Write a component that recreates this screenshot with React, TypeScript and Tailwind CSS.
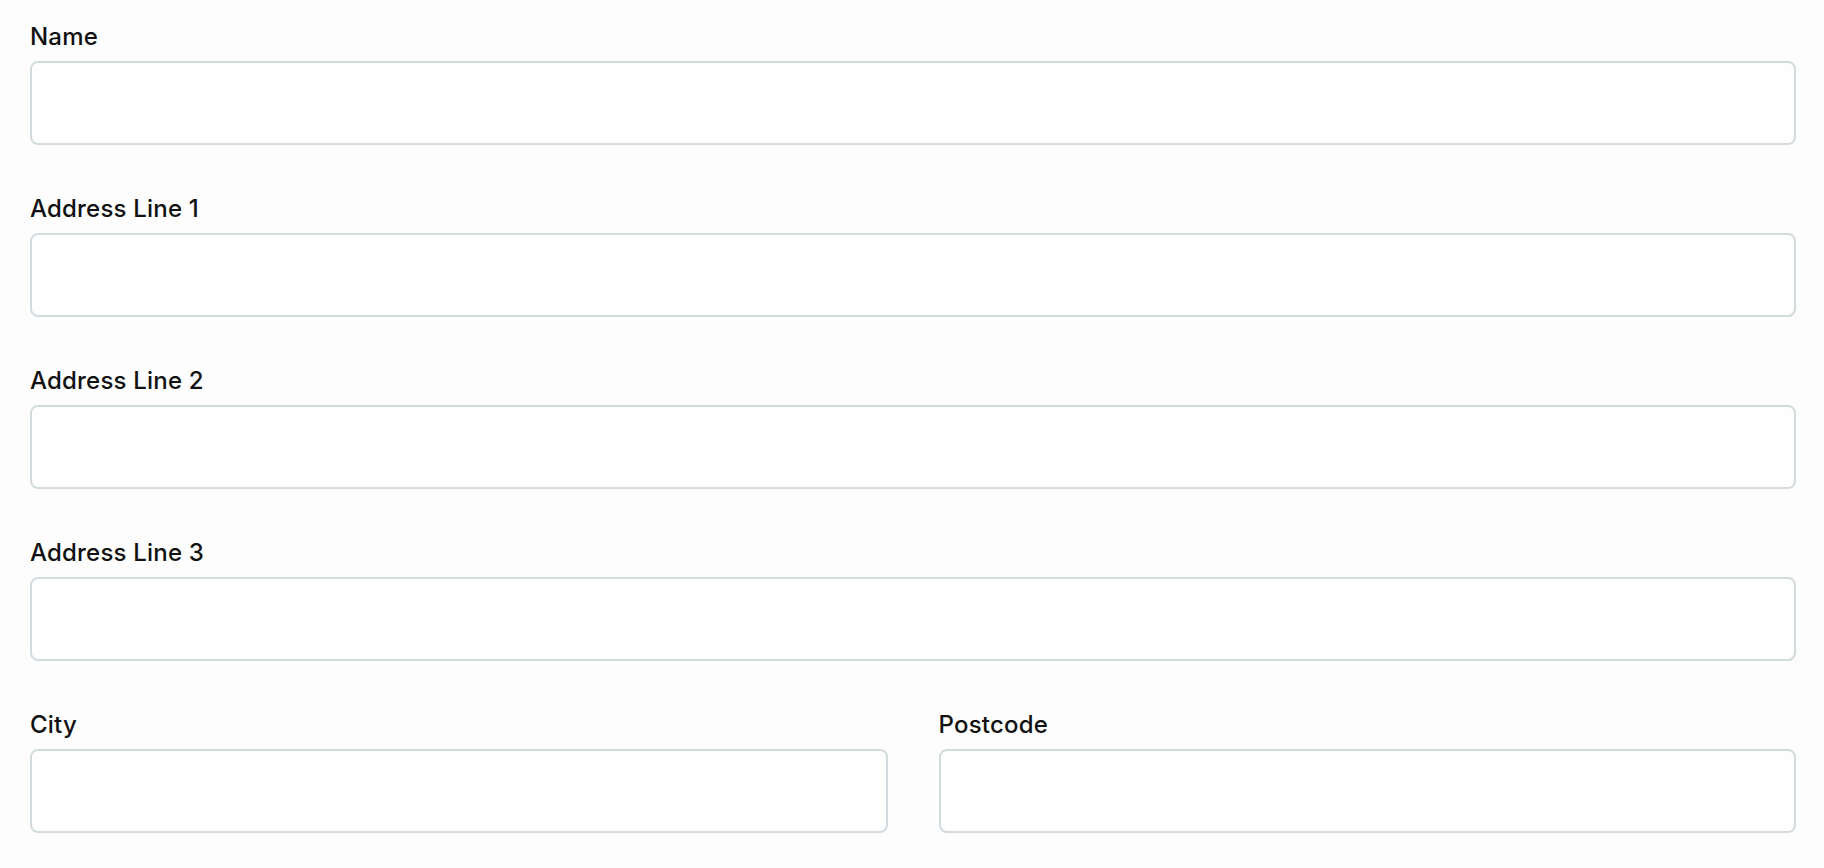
import React from "react"

const labelCls =
  "block text-[24px] leading-8 font-medium tracking-[0.2px] text-[#111111] [font-family:Inter,'Liberation_Sans',sans-serif]"
const inputCls =
  "block w-full h-[84px] rounded-[8px] border-2 border-[#d3dbdf] bg-[#fefefe] px-4 text-[22px] outline-none"

function Field({ label, id }: { label: string; id: string }) {
  return (
    <div className="flex flex-col gap-[8px]">
      <label htmlFor={id} className={labelCls}>
        {label}
      </label>
      <input id={id} type="text" className={inputCls} />
    </div>
  )
}

export default function App() {
  return (
    <div className="min-h-screen w-full bg-[#fdfdfd] pl-[30px] pr-[28px] pt-[21px] pb-[40px]">
      <form className="flex flex-col gap-[48px]">
        <Field label="Name" id="name" />
        <Field label="Address Line 1" id="address1" />
        <Field label="Address Line 2" id="address2" />
        <Field label="Address Line 3" id="address3" />
        {/* City + postcode share a row */}
        <div className="grid grid-cols-2 gap-[51px]">
          <Field label="City" id="city" />
          <Field label="Postcode" id="postcode" />
        </div>
      </form>
    </div>
  )
}
